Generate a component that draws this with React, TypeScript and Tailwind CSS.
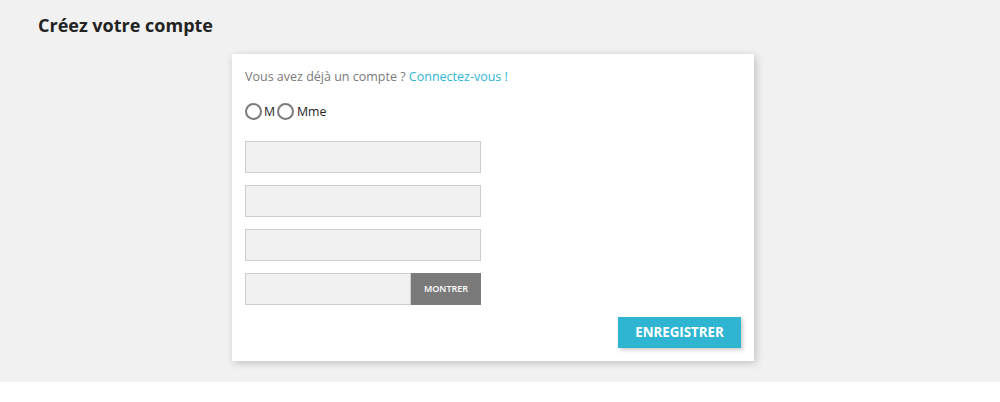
export default function App() {
  const inputCls = "h-[32px] w-[236px] border border-[#cdcdcd] bg-[#f1f1f1]";
  return (
    <div className="w-[1000px] bg-white font-['Open_Sans',sans-serif]">
      <div className="h-[382px] bg-[#f1f1f1] pt-[12px]">
        <h1 className="ml-[38px] text-[18px] font-bold leading-[26px] text-[#232323]">Créez votre compte</h1>
        <div className="ml-[232px] mt-[16px] w-[522px] bg-white px-[13px] pb-[13px] pt-[13px] shadow-[2px_2px_8px_0_rgba(0,0,0,0.2)]">
          <p className="text-[12.5px] leading-[20px] text-[#7a7a7a]">
            Vous avez déjà un compte ? <a className="text-[#2fb5d2]" href="#">Connectez-vous !</a>
          </p>
          <div className="mt-[16px] flex items-center text-[12.3px] leading-[16px] text-[#232323]">
            <span className="h-[17px] w-[17px] rounded-full border-2 border-[#7a7a7a]" />
            <span className="ml-[2px]">M</span>
            <span className="ml-[2px] h-[17px] w-[17px] rounded-full border-2 border-[#7a7a7a]" />
            <span className="ml-[3px]">Mme</span>
          </div>
          <div className="mt-[21px] flex flex-col gap-[12px]">
            <div className={inputCls} />
            <div className={inputCls} />
            <div className={inputCls} />
            <div className="flex h-[32px] w-[236px]">
              <div className="h-full flex-1 border border-[#cdcdcd] bg-[#f1f1f1]" />
              <div className="flex h-full w-[70px] items-center justify-center bg-[#7a7a7a] text-[9px] font-semibold text-white">MONTRER</div>
            </div>
          </div>
          <div className="mt-[12px] flex justify-end">
            <button className="h-[31px] w-[123px] bg-[#2fb5d2] text-[13.3px] font-bold text-white shadow-[2px_2px_4px_0_rgba(0,0,0,0.2)]">ENREGISTRER</button>
          </div>
        </div>
      </div>
    </div>
  );
}
